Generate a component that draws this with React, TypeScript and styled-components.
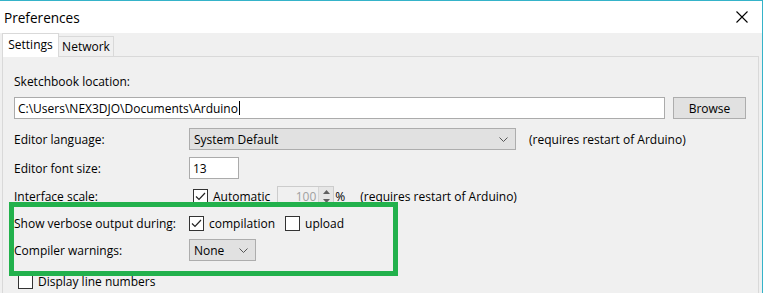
import React from 'react';
import styled, { createGlobalStyle } from 'styled-components';

const Global = createGlobalStyle`
  html, body { margin: 0; padding: 0; background: #ffffff; }
  body {
    font-family: "Open Sans", "Liberation Sans", Arial, sans-serif;
    font-size: 12px;
    color: #000;
    overflow: hidden;
  }
  #root { width: 766px; height: 293px; }
`;

const Window = styled.div`
  position: relative;
  width: 763px;
  height: 293px;
  box-sizing: border-box;
  border-top: 1px solid #35b3c9;
  border-right: 1px solid #35b3c9;
  background: #f0f0f0;
  display: flex;
  flex-direction: column;
  overflow: hidden;
`;

const TitleBar = styled.div`
  height: 32px;
  flex: none;
  background: #ffffff;
  display: flex;
  align-items: center;
  justify-content: space-between;
  padding: 0 14px 0 4px;
`;

const Title = styled.div`
  font-size: 13.6px;
  color: #000;
`;

const CloseIcon = styled.svg`
  width: 12px;
  height: 12px;
  display: block;
`;

const TabStrip = styled.div`
  position: relative;
  z-index: 1;
  display: flex;
  align-items: flex-end;
  height: 23px;
  padding-left: 2px;
`;

const Tab = styled.div<{ $active?: boolean }>`
  box-sizing: border-box;
  height: ${p => (p.$active ? 24 : 20)}px;
  margin-bottom: ${p => (p.$active ? -1 : 0)}px;
  width: ${p => (p.$active ? 57 : 55)}px;
  padding-top: ${p => (p.$active ? 3 : 2)}px;
  text-align: center;
  background: ${p => (p.$active ? '#ffffff' : '#f0f0f0')};
  border: 1px solid #d9d9d9;
  border-bottom: none;
  border-left: ${p => (p.$active ? '1px solid #d9d9d9' : 'none')};
  font-size: 12px;
  line-height: 16px;
  color: #000;
`;

const Panel = styled.div`
  flex: 1;
  margin: 0 3px 0 2px;
  border: 1px solid #d9d9d9;
  border-bottom: none;
  padding: 16px 0 0 11px;
  display: flex;
  flex-direction: column;
`;

const Row = styled.div<{ $h: number; $mt?: number }>`
  display: flex;
  align-items: center;
  height: ${p => p.$h}px;
  margin-top: ${p => p.$mt ?? 0}px;
  flex: none;
`;

const Label = styled.div<{ $w?: number }>`
  width: ${p => (p.$w ? `${p.$w}px` : 'auto')};
  flex: none;
  white-space: nowrap;
`;

const TextInput = styled.div<{ $w: number }>`
  box-sizing: border-box;
  width: ${p => p.$w}px;
  height: 100%;
  background: #ffffff;
  border: 1px solid #ababab;
  display: flex;
  align-items: center;
  padding-left: 3px;
  white-space: nowrap;
`;

const Caret = styled.span`
  display: inline-block;
  width: 1px;
  height: 14px;
  background: #000;
  margin-left: 1px;
`;

const Button = styled.div`
  box-sizing: border-box;
  width: 73px;
  height: 100%;
  margin-left: 8px;
  background: #e1e1e1;
  border: 1px solid #adadad;
  display: flex;
  align-items: center;
  justify-content: center;
`;

const Select = styled.div<{ $w: number }>`
  box-sizing: border-box;
  width: ${p => p.$w}px;
  height: 100%;
  background: #e1e1e1;
  border: 1px solid #adadad;
  display: flex;
  align-items: center;
  justify-content: space-between;
  padding: 0 7px 0 4px;
`;

const Chevron = styled.svg`
  width: 9px;
  height: 5px;
  display: block;
`;

const Note = styled.div<{ $ml: number }>`
  margin-left: ${p => p.$ml}px;
  white-space: nowrap;
`;

const CheckBox = styled.div<{ $ml?: number }>`
  box-sizing: border-box;
  width: 15px;
  height: 15px;
  margin-left: ${p => p.$ml ?? 0}px;
  border: 1px solid #333333;
  background: #ffffff;
  display: flex;
  align-items: center;
  justify-content: center;
  flex: none;
`;

const CheckLabel = styled.span`
  margin-left: 5px;
  white-space: nowrap;
`;

const Spinner = styled.div`
  box-sizing: border-box;
  width: 57px;
  height: 100%;
  margin-left: 7px;
  border: 1px solid #cccccc;
  background: #f0f0f0;
  display: flex;
  align-items: stretch;
`;

const SpinValue = styled.div`
  flex: 1;
  color: #a0a0a0;
  padding-right: 2px;
  display: flex;
  align-items: center;
  justify-content: flex-end;
`;

const SpinArrows = styled.div`
  width: 14px;
  display: flex;
  flex-direction: column;
  border-left: 1px solid #d6d6d6;
`;

const SpinArrow = styled.div`
  flex: 1;
  display: flex;
  align-items: center;
  justify-content: center;
  background: #e6e6e6;
`;

const Highlight = styled.div`
  position: absolute;
  left: 9px;
  top: 201px;
  width: 389px;
  height: 74px;
  box-sizing: border-box;
  border: 5px solid #22b14c;
  pointer-events: none;
`;

const Check = () => (
  <svg width="11" height="9" viewBox="0 0 11 9">
    <polyline points="1,4.5 4,7.5 10,1" fill="none" stroke="#222" strokeWidth="1.2" />
  </svg>
);

const Down = () => (
  <Chevron viewBox="0 0 9 5">
    <polyline points="0.5,0.5 4.5,4.5 8.5,0.5" fill="none" stroke="#555" strokeWidth="1" />
  </Chevron>
);

export default function App() {
  return (
    <>
      <Global />
      <Window>
        <TitleBar>
          <Title>Preferences</Title>
          <CloseIcon viewBox="0 0 12 12">
            <path d="M0.5 0.5 L11.5 11.5 M11.5 0.5 L0.5 11.5" stroke="#000" strokeWidth="1.1" />
          </CloseIcon>
        </TitleBar>
        <TabStrip>
          <Tab $active>Settings</Tab>
          <Tab>Network</Tab>
        </TabStrip>
        <Panel>
          <Row $h={16}>
            <Label>Sketchbook location:</Label>
          </Row>
          <Row $h={22} $mt={8}>
            <TextInput $w={651}>
              C:\Users\NEX3DJO\Documents\Arduino<Caret />
            </TextInput>
            <Button>Browse</Button>
          </Row>
          <Row $h={22} $mt={9}>
            <Label $w={175}>Editor language:</Label>
            <Select $w={327}>
              <span>System Default</span>
              <Down />
            </Select>
            <Note $ml={13}>(requires restart of Arduino)</Note>
          </Row>
          <Row $h={22} $mt={7}>
            <Label $w={175}>Editor font size:</Label>
            <TextInput $w={50}>13</TextInput>
          </Row>
          <Row $h={20} $mt={7}>
            <Label $w={179}>Interface scale:</Label>
            <CheckBox>
              <Check />
            </CheckBox>
            <CheckLabel>Automatic</CheckLabel>
            <Spinner>
              <SpinValue>100</SpinValue>
              <SpinArrows>
                <SpinArrow>
                  <svg width="7" height="4" viewBox="0 0 7 4"><polygon points="0,4 3.5,0 7,4" fill="#606060" /></svg>
                </SpinArrow>
                <SpinArrow>
                  <svg width="7" height="4" viewBox="0 0 7 4"><polygon points="0,0 3.5,4 7,0" fill="#606060" /></svg>
                </SpinArrow>
              </SpinArrows>
            </Spinner>
            <Note $ml={1}>%</Note>
            <Note $ml={15}>(requires restart of Arduino)</Note>
          </Row>
          <Row $h={16} $mt={9}>
            <Label $w={175}>Show verbose output during:</Label>
            <CheckBox>
              <Check />
            </CheckBox>
            <CheckLabel>compilation</CheckLabel>
            <CheckBox $ml={10} />
            <CheckLabel>upload</CheckLabel>
          </Row>
          <Row $h={22} $mt={8}>
            <Label $w={175}>Compiler warnings:</Label>
            <Select $w={67}>
              <span>None</span>
              <Down />
            </Select>
          </Row>
          <Row $h={16} $mt={12}>
            <CheckBox $ml={4} />
            <CheckLabel>Display line numbers</CheckLabel>
          </Row>
        </Panel>
        <Highlight />
      </Window>
    </>
  );
}
